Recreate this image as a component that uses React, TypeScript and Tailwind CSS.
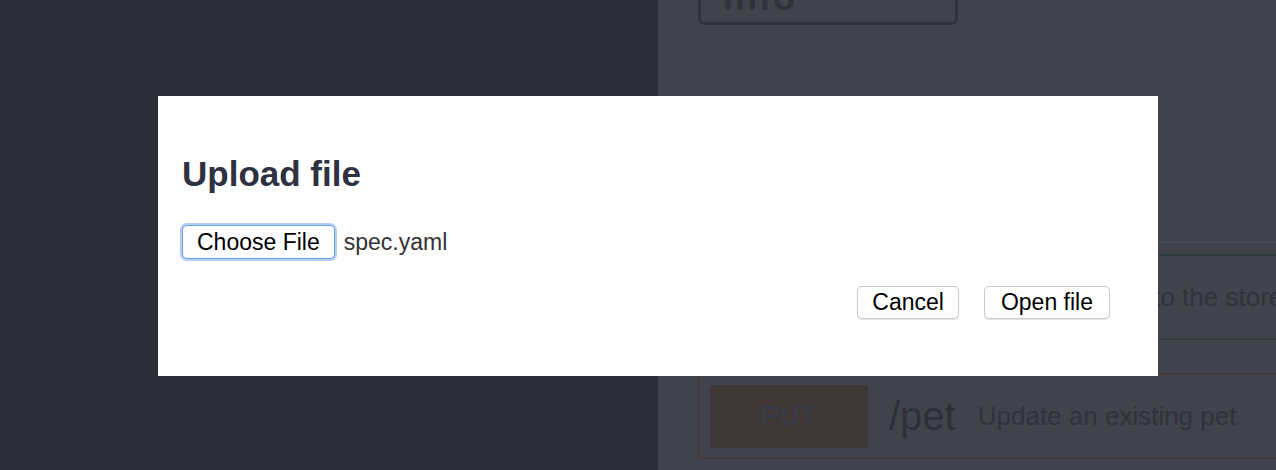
import { ChevronDown } from 'lucide-react';

const font = { fontFamily: '"Liberation Sans", Arial, sans-serif' };

function OpRow({ method, path, summary, border, badge, summaryGap }: {
  method: string;
  path: string;
  summary: string;
  border: string;
  badge: string;
  summaryGap: string;
}) {
  return (
    <div className={`w-[700px] shrink-0 h-[86px] border-2 rounded-[4px] flex items-center pl-[10px] ${border}`}>
      <div className={`w-[158px] h-[63px] rounded-[4px] flex items-center justify-center text-[28px] font-bold text-[#383a45] ${badge}`}>
        {method}
      </div>
      <span className="ml-[21px] text-[40px] text-[#2d2f39] leading-none">{path}</span>
      <span className={`text-[26px] text-[#30323c] leading-none whitespace-nowrap ${summaryGap}`}>{summary}</span>
    </div>
  );
}

export default function App() {
  return (
    <div className="relative w-[1276px] h-[470px] overflow-hidden flex" style={font}>
      {/* Editor side */}
      <div className="w-[658px] shrink-0 bg-[#2a2d36]" />

      {/* Docs side (dimmed behind dialog) */}
      <div className="flex-1 bg-[#41434c] overflow-hidden pl-[40px] flex flex-col">
        <div className="-mt-[35px] w-[260px] h-[60px] shrink-0 border-[3px] border-[#2f313b] rounded-[7px] flex items-center pl-[22px] pr-[30px] justify-between">
          <span className="text-[36px] font-bold text-[#30323c] tracking-[2px] translate-y-[3px]">Info</span>
          <ChevronDown size={22} strokeWidth={3} className="text-[#30323c]" />
        </div>
        <div className="w-[700px] shrink-0 h-[218px] border-b border-[#4a4d56]" />
        <div className="mt-[11px]">
          <OpRow
            method="POST"
            path="/pet"
            summary="Add a new pet to the store"
            border="border-[#323e3f]"
            badge="bg-[#35423c]"
            summaryGap="ml-[24px]"
          />
        </div>
        <div className="mt-[33px]">
          <OpRow
            method="PUT"
            path="/pet"
            summary="Update an existing pet"
            border="border-[#443b38]"
            badge="bg-[#3f3735]"
            summaryGap="ml-[22px]"
          />
        </div>
      </div>

      {/* Upload dialog */}
      <div className="absolute left-[158px] top-[96px] w-[1000px] h-[280px] bg-white pl-6 pr-12 pt-[60px] flex flex-col">
        <h2 className="text-[35px] leading-none font-bold text-[#2e3140]">Upload file</h2>
        <div className="mt-[34px] flex items-center">
          <button className="h-[34px] px-[14px] rounded-[5px] border border-[#6d9ee8] shadow-[0_0_0_2px_#b3cff5] bg-white text-[23px] text-black leading-none">
            Choose File
          </button>
          <span className="ml-[9px] text-[23px] text-[#333] leading-none">spec.yaml</span>
        </div>
        <div className="mt-[27px] flex justify-end gap-[25px]">
          <button className="h-[33px] px-[14px] rounded-[5px] border border-[#c9c9c9] shadow-[0_1px_1px_rgba(0,0,0,0.12)] bg-white text-[23px] text-black leading-none">
            Cancel
          </button>
          <button className="h-[33px] px-[16px] rounded-[5px] border border-[#c9c9c9] shadow-[0_1px_1px_rgba(0,0,0,0.12)] bg-white text-[23px] text-black leading-none">
            Open file
          </button>
        </div>
      </div>
    </div>
  );
}
